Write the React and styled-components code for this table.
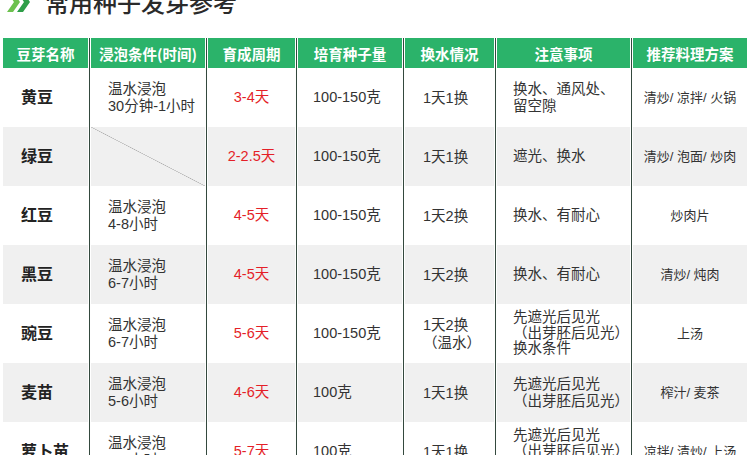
import React from "react";
import styled, { createGlobalStyle } from "styled-components";

const Global = createGlobalStyle`
  html, body { margin: 0; padding: 0; background: #fff; }
  body {
    width: 750px; height: 455px; overflow: hidden;
    font-family: "Liberation Sans", "Noto Sans CJK SC", sans-serif;
  }
`;

const Page = styled.div`
  width: 750px;
  display: flex;
  flex-direction: column;
`;

const TitleBar = styled.div`
  display: flex;
  align-items: center;
  gap: 13px;
  height: 24px;
  margin-top: -10px;
  padding-left: 4px;
`;

const Title = styled.h1`
  margin: 0;
  font-family: "Noto Sans CJK SC", sans-serif;
  font-size: 24px;
  line-height: 24px;
  font-weight: 500;
  color: #2a2a2a;
  letter-spacing: 0;
`;

const Table = styled.div`
  margin-top: 24px;
  margin-left: 3px;
  display: grid;
  grid-template-columns: 85px 3px 114px 3px 87px 3px 104px 3px 89px 3px 133px 3px 114px;
  grid-template-rows: 30px repeat(7, 59px);
`;

const Divider = styled.div`
  grid-row: 1 / -1;
  grid-column: ${(p) => p.$col};
  background: linear-gradient(
    to right,
    transparent 0.75px,
    #34493e 0.75px,
    #34493e 2.25px,
    transparent 2.25px
  );
`;

const Head = styled.div`
  background: #2bb36a;
  color: #fff;
  font-weight: 700;
  font-size: 14.5px;
  display: flex;
  align-items: center;
  justify-content: center;
  font-family: "Noto Sans CJK SC", sans-serif;
`;

const Cell = styled.div`
  background: ${(p) => (p.$alt ? "#f0f0f0" : "#fff")};
  display: flex;
  flex-direction: column;
  justify-content: center;
  align-items: ${(p) => (p.$center ? "center" : "flex-start")};
  padding-left: ${(p) => p.$pad || 0}px;
  font-size: ${(p) => p.$size || 14.5}px;
  line-height: ${(p) => p.$lh || 17}px;
  color: ${(p) => p.$color || "#333"};
  font-weight: ${(p) => (p.$bold ? 700 : 400)};
  white-space: nowrap;
`;

const Slashed = styled(Cell)`
  background:
    linear-gradient(to top right, transparent calc(50% - 0.6px), #b0b0b0 50%, transparent calc(50% + 0.6px)),
    ${(p) => (p.$alt ? "#f0f0f0" : "#fff")};
`;

const Line = styled.span`
  display: block;
`;

const Chevrons = () => (
  <svg width="28" height="22" viewBox="0 0 28 22">
    <polygon points="3,1 9,1 16,11 9,21 3,21 10,11" fill="#6cc14e" />
    <polygon points="13,1 19,1 26,11 19,21 13,21 20,11" fill="#2e9e48" />
  </svg>
);

const headers = ["豆芽名称", "浸泡条件(时间)", "育成周期", "培育种子量", "换水情况", "注意事项", "推荐料理方案"];

const rows = [
  { name: "黄豆", soak: ["温水浸泡", "30分钟-1小时"], period: "3-4天", qty: "100-150克", water: ["1天1换"], notes: ["换水、通风处、", "留空隙"], recipe: "清炒/ 凉拌/ 火锅" },
  { name: "绿豆", soak: null, period: "2-2.5天", qty: "100-150克", water: ["1天1换"], notes: ["遮光、换水"], recipe: "清炒/ 泡面/ 炒肉" },
  { name: "红豆", soak: ["温水浸泡", "4-8小时"], period: "4-5天", qty: "100-150克", water: ["1天2换"], notes: ["换水、有耐心"], recipe: "炒肉片" },
  { name: "黑豆", soak: ["温水浸泡", "6-7小时"], period: "4-5天", qty: "100-150克", water: ["1天2换"], notes: ["换水、有耐心"], recipe: "清炒/ 炖肉" },
  { name: "豌豆", soak: ["温水浸泡", "6-7小时"], period: "5-6天", qty: "100-150克", water: ["1天2换", "（温水）"], notes: ["先遮光后见光", "（出芽胚后见光）", "换水条件"], recipe: "上汤" },
  { name: "麦苗", soak: ["温水浸泡", "5-6小时"], period: "4-6天", qty: "100克", water: ["1天1换"], notes: ["先遮光后见光", "（出芽胚后见光）"], recipe: "榨汁/ 麦茶" },
  { name: "萝卜苗", soak: ["温水浸泡", "4-6小时"], period: "5-7天", qty: "100克", water: ["1天1换"], notes: ["先遮光后见光", "（出芽胚后见光）", "换水条件"], recipe: "凉拌/ 清炒/ 上汤" },
];

const Lines = ({ items }) => items.map((t, i) => <Line key={i}>{t}</Line>);

export default function App() {
  return (
    <Page>
      <Global />
      <TitleBar>
        <Chevrons />
        <Title>常用种子发芽参考</Title>
      </TitleBar>
      <Table>
        {[2, 4, 6, 8, 10, 12].map((c) => (
          <Divider key={c} $col={c} />
        ))}
        {headers.map((h) => (
          <Head key={h}>{h}</Head>
        ))}
        {rows.map((r, i) => {
          const alt = i % 2 === 1;
          return (
            <React.Fragment key={r.name}>
              <Cell $alt={alt} $pad={18} $bold $size={16} $color="#222">{r.name}</Cell>
              {r.soak ? (
                <Cell $alt={alt} $pad={17}><Lines items={r.soak} /></Cell>
              ) : (
                <Slashed $alt={alt} />
              )}
              <Cell $alt={alt} $center $color="#e41f28">{r.period}</Cell>
              <Cell $alt={alt} $pad={15}>{r.qty}</Cell>
              <Cell $alt={alt} $pad={18} $lh={18}><Lines items={r.water} /></Cell>
              <Cell $alt={alt} $pad={16} $lh={r.notes.length > 2 ? 15.5 : 17}><Lines items={r.notes} /></Cell>
              <Cell $alt={alt} $center $size={13}>{r.recipe}</Cell>
            </React.Fragment>
          );
        })}
      </Table>
    </Page>
  );
}
